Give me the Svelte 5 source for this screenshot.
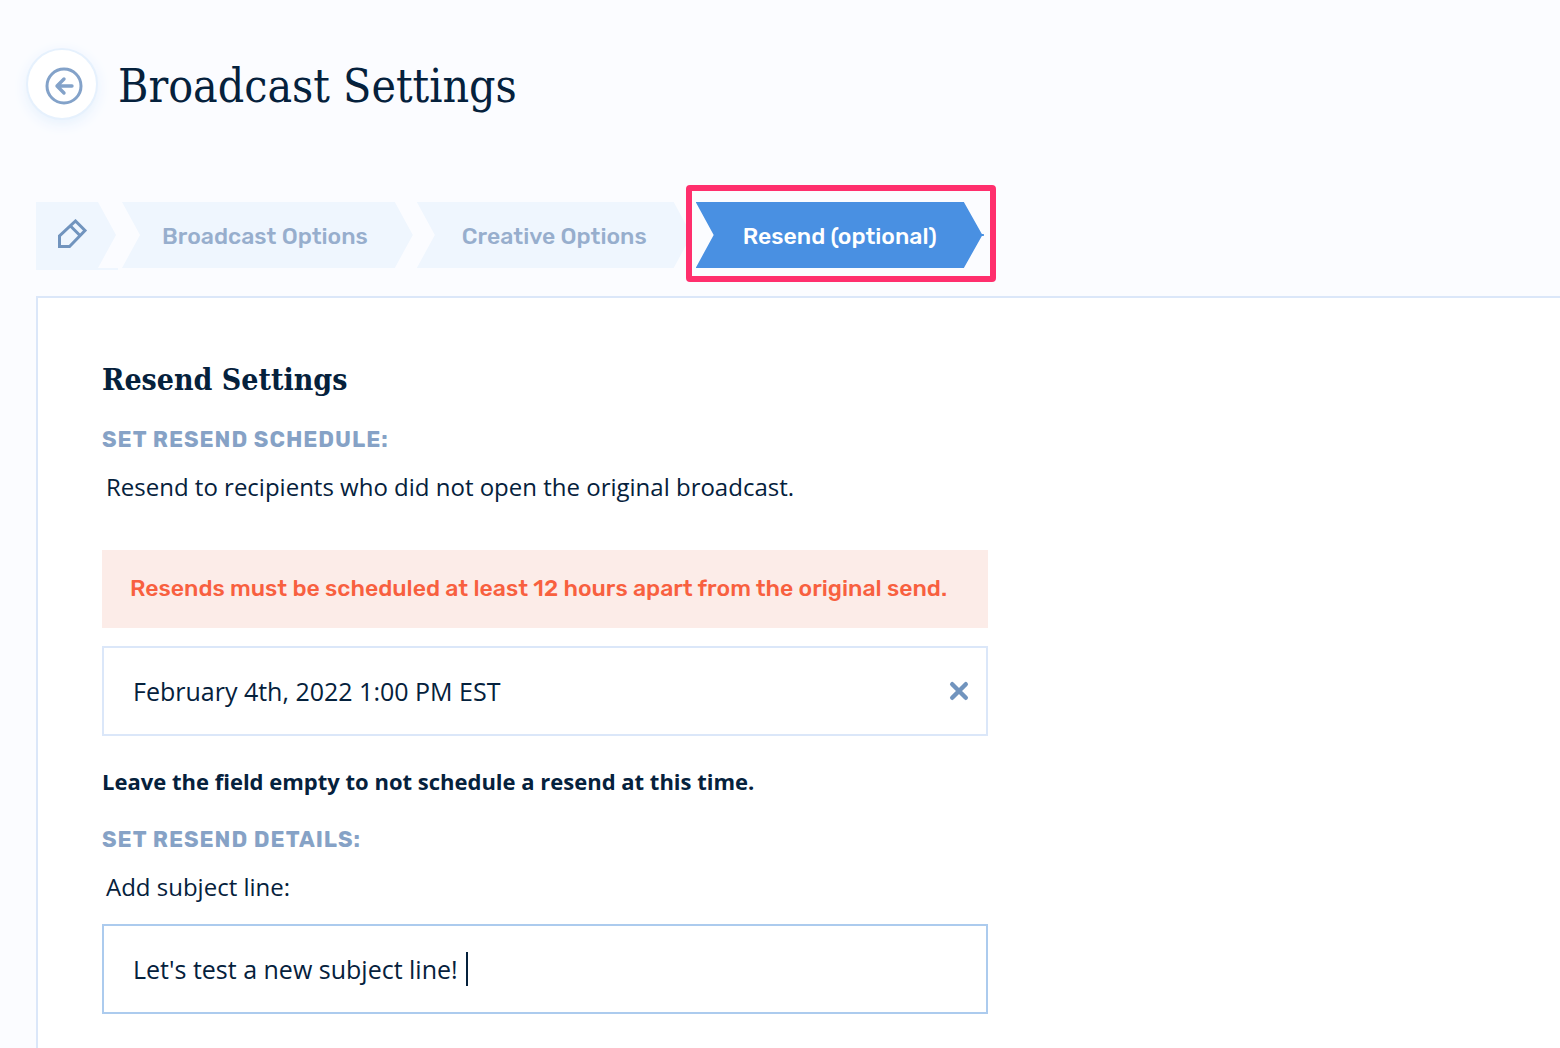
<script lang="ts">
  const steps = [
    { label: 'Broadcast Options', current: false },
    { label: 'Creative Options', current: false },
    { label: 'Resend (optional)', current: true },
  ];
  let sendDate = $state('February 4th, 2022 1:00 PM EST');
  let subject = $state("Let's test a new subject line!");
</script>

<div class="page">
  <header>
    <button class="back" aria-label="Back">
      <svg viewBox="0 0 40 40" fill="none" stroke="#83a2c9" stroke-linecap="round" stroke-linejoin="round">
        <circle cx="20" cy="20" r="17" stroke-width="3" />
        <path d="M28 20H13M20 13L13 20l7 7" stroke-width="3.400" />
      </svg>
    </button>
    <h1>Broadcast Settings</h1>
  </header>

  <nav aria-label="Broadcast steps">
    <ol>
      <li class="edit">
        <button class="step first" aria-label="Edit">
          <svg viewBox="0 0 32 32" fill="none" stroke="#7194be" stroke-width="3">
            <path d="M3.500 27.500V17L19.500 2L29 11.500L13.500 27.500ZM14.500 7L24 16.500" />
          </svg>
        </button>
      </li>
      {#each steps as step}
        <li class:highlight={step.current}>
          <button class="step" class:current={step.current} aria-current={step.current ? 'step' : undefined}>{step.label}</button>
        </li>
      {/each}
    </ol>
  </nav>

  <main>
    <form onsubmit={(e) => e.preventDefault()}>
      <h2>Resend Settings</h2>
      <h3>Set resend schedule:</h3>
      <label class="hint" for="date">Resend to recipients who did not open the original broadcast.</label>
      <p class="alert" role="alert">Resends must be scheduled at least 12 hours apart from the original send.</p>
      <div class="field">
        <input id="date" type="text" bind:value={sendDate} />
        <button class="clear" type="button" aria-label="Clear date" onclick={() => (sendDate = '')}>
          <svg viewBox="0 0 20 20" stroke="#7194be" stroke-width="4.400" stroke-linecap="round">
            <path d="M3.200 3.200L16.800 16.800M16.800 3.200L3.200 16.800" />
          </svg>
        </button>
      </div>
      <p class="note">Leave the field empty to not schedule a resend at this time.</p>
      <h3>Set resend details:</h3>
      <label class="hint" for="subject">Add subject line:</label>
      <div class="field active">
        <input id="subject" type="text" bind:value={subject} />
        <span class="caret"></span>
      </div>
    </form>
  </main>
</div>

<style>
  :global(body) {
    background: #fbfcff;
  }
  .page {
    min-height: 100vh;
    box-sizing: border-box;
    display: flex;
    flex-direction: column;
    padding-top: 48px;
    color: #05213c;
    font-family: 'Open Sans', sans-serif;
  }
  button {
    border: 0;
    padding: 0;
    cursor: pointer;
  }
  svg {
    display: block;
  }
  h1, h2, h3, p, ol {
    margin: 0;
    padding: 0;
  }
  header {
    display: flex;
    align-items: center;
    gap: 20px;
    padding-left: 26px;
  }
  .back {
    display: grid;
    place-items: center;
    box-sizing: border-box;
    width: 72px;
    height: 72px;
    padding: 4px 0 0 4px;
    border: 2px solid #e6f1fd;
    border-radius: 50%;
    background: #fff;
    box-shadow: 0 4px 14px #e6f1fd;
  }
  .back svg {
    width: 40px;
    height: 40px;
  }
  h1 {
    padding-top: 4px;
    font: 400 46px/68px 'Roboto Slab', 'DejaVu Serif Condensed', 'DejaVu Serif', serif;
  }
  nav {
    padding: 82px 36px 26px;
  }
  ol {
    display: flex;
    align-items: flex-start;
    gap: 4px;
    list-style: none;
  }
  li {
    position: relative;
  }
  .edit {
    width: 82px;
    height: 66px;
    border-bottom: 2px solid #eff6fe;
  }
  .step {
    display: block;
    height: 66px;
    padding: 2px 45px 0;
    background: #eff6fe;
    color: #97aecd;
    font: 500 23px/64px 'Rubik', 'Roboto', sans-serif;
    white-space: nowrap;
    clip-path: polygon(0 0, calc(100% - 18px) 0, 100% 50%, calc(100% - 18px) 100%, 0 100%, 18px 50%);
  }
  .edit + li .step {
    padding-left: 40px;
  }
  .first {
    width: 80px;
    padding: 0 0 0 20px;
    clip-path: polygon(0 0, calc(100% - 18px) 0, 100% 50%, calc(100% - 18px) 100%, 0 100%);
  }
  .first svg {
    width: 32px;
    height: 32px;
  }
  .current {
    padding: 2px 47px 0;
    background: #4990e2;
    color: #fff;
    clip-path: polygon(0 0, calc(100% - 20px) 0, calc(100% - 2px) 32px, 100% 32px, 100% 34px, calc(100% - 2px) 34px, calc(100% - 20px) 100%, 0 100%, 18px 50%);
  }
  .highlight::after {
    content: '';
    position: absolute;
    inset: -17px -12px -14px -10px;
    border: 6px solid #ff2f6d;
    border-radius: 4px;
  }
  main {
    flex: 1;
    margin-left: 36px;
    padding: 62px 64px 34px;
    border: solid #dbe7f9;
    border-width: 2px 0 0 2px;
    background: #fff;
  }
  form {
    display: flex;
    flex-direction: column;
    max-width: 886px;
  }
  h2 {
    margin-bottom: 28px;
    font: 700 30px/40px 'Roboto Slab', 'DejaVu Serif Condensed', 'DejaVu Serif', serif;
  }
  h3 {
    margin-bottom: 20px;
    color: #86a2c6;
    font: 700 22px/24px 'Rubik', 'Roboto', sans-serif;
    letter-spacing: 1px;
    text-transform: uppercase;
  }
  .hint {
    padding-left: 4px;
    margin-bottom: 22px;
    font-size: 24px;
    line-height: 30px;
  }
  .alert {
    margin: 26px 0 18px;
    padding: 22px 28px 24px;
    background: #fcece8;
    color: #f8603f;
    font: 500 23px/32px 'Rubik', 'Roboto', sans-serif;
  }
  .field {
    position: relative;
    display: flex;
    align-items: center;
    box-sizing: border-box;
    height: 90px;
    padding: 0 17px 0 29px;
    border: 2px solid #dbe7f9;
  }
  .field.active {
    border-color: #accbee;
  }
  input {
    flex: 1;
    min-width: 0;
    height: 100%;
    padding: 0;
    border: 0;
    outline: 0;
    background: none;
    color: inherit;
    font: 400 25px/32px 'Open Sans', sans-serif;
  }
  .clear {
    background: none;
  }
  .clear svg {
    width: 20px;
    height: 20px;
  }
  .caret {
    position: absolute;
    left: 362px;
    top: 26px;
    width: 2px;
    height: 34px;
    background: #05213c;
  }
  .note {
    margin: 30px 0 32px;
    font-size: 22px;
    font-weight: 700;
    line-height: 30px;
  }
</style>
